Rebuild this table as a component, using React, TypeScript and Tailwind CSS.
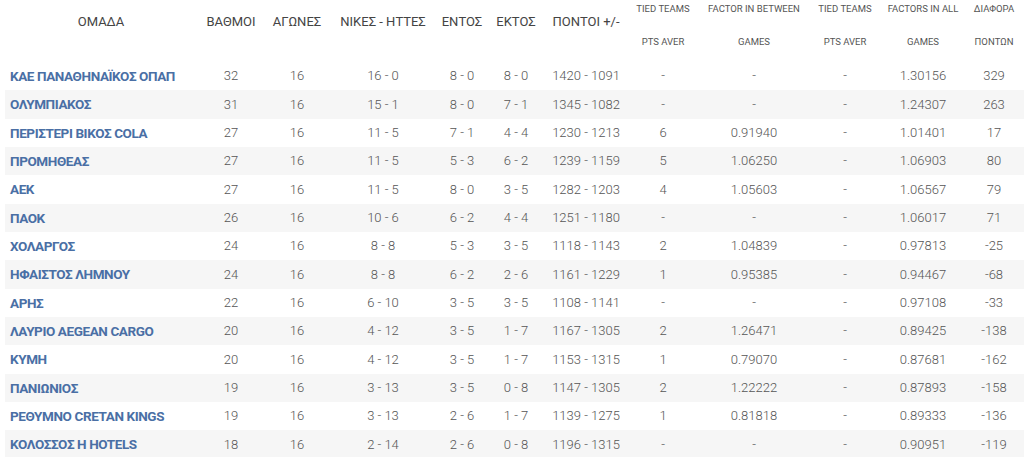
const COLS = [
  "w-[192px]",
  "w-[68px]",
  "w-[64px]",
  "w-[108px]",
  "w-[50px]",
  "w-[58px]",
  "w-[82px]",
  "w-[72px]",
  "w-[110px]",
  "w-[72px]",
  "w-[84px]",
  "w-[58px]",
];

type Row = {
  team: string;
  pts: number;
  games: number;
  wl: string;
  home: string;
  away: string;
  points: string;
  tied: string;
  factor: string;
  tied2: string;
  factorAll: string;
  diff: number;
};

const ROWS: Row[] = [
  { team: "ΚΑΕ ΠΑΝΑΘΗΝΑΪΚΟΣ ΟΠΑΠ", pts: 32, games: 16, wl: "16 - 0", home: "8 - 0", away: "8 - 0", points: "1420 - 1091", tied: "-", factor: "-", tied2: "-", factorAll: "1.30156", diff: 329 },
  { team: "ΟΛΥΜΠΙΑΚΟΣ", pts: 31, games: 16, wl: "15 - 1", home: "8 - 0", away: "7 - 1", points: "1345 - 1082", tied: "-", factor: "-", tied2: "-", factorAll: "1.24307", diff: 263 },
  { team: "ΠΕΡΙΣΤΕΡΙ ΒΙΚΟΣ COLA", pts: 27, games: 16, wl: "11 - 5", home: "7 - 1", away: "4 - 4", points: "1230 - 1213", tied: "6", factor: "0.91940", tied2: "-", factorAll: "1.01401", diff: 17 },
  { team: "ΠΡΟΜΗΘΕΑΣ", pts: 27, games: 16, wl: "11 - 5", home: "5 - 3", away: "6 - 2", points: "1239 - 1159", tied: "5", factor: "1.06250", tied2: "-", factorAll: "1.06903", diff: 80 },
  { team: "ΑΕΚ", pts: 27, games: 16, wl: "11 - 5", home: "8 - 0", away: "3 - 5", points: "1282 - 1203", tied: "4", factor: "1.05603", tied2: "-", factorAll: "1.06567", diff: 79 },
  { team: "ΠΑΟΚ", pts: 26, games: 16, wl: "10 - 6", home: "6 - 2", away: "4 - 4", points: "1251 - 1180", tied: "-", factor: "-", tied2: "-", factorAll: "1.06017", diff: 71 },
  { team: "ΧΟΛΑΡΓΟΣ", pts: 24, games: 16, wl: "8 - 8", home: "5 - 3", away: "3 - 5", points: "1118 - 1143", tied: "2", factor: "1.04839", tied2: "-", factorAll: "0.97813", diff: -25 },
  { team: "ΗΦΑΙΣΤΟΣ ΛΗΜΝΟΥ", pts: 24, games: 16, wl: "8 - 8", home: "6 - 2", away: "2 - 6", points: "1161 - 1229", tied: "1", factor: "0.95385", tied2: "-", factorAll: "0.94467", diff: -68 },
  { team: "ΑΡΗΣ", pts: 22, games: 16, wl: "6 - 10", home: "3 - 5", away: "3 - 5", points: "1108 - 1141", tied: "-", factor: "-", tied2: "-", factorAll: "0.97108", diff: -33 },
  { team: "ΛΑΥΡΙΟ AEGEAN CARGO", pts: 20, games: 16, wl: "4 - 12", home: "3 - 5", away: "1 - 7", points: "1167 - 1305", tied: "2", factor: "1.26471", tied2: "-", factorAll: "0.89425", diff: -138 },
  { team: "ΚΥΜΗ", pts: 20, games: 16, wl: "4 - 12", home: "3 - 5", away: "1 - 7", points: "1153 - 1315", tied: "1", factor: "0.79070", tied2: "-", factorAll: "0.87681", diff: -162 },
  { team: "ΠΑΝΙΩΝΙΟΣ", pts: 19, games: 16, wl: "3 - 13", home: "3 - 5", away: "0 - 8", points: "1147 - 1305", tied: "2", factor: "1.22222", tied2: "-", factorAll: "0.87893", diff: -158 },
  { team: "ΡΕΘΥΜΝΟ CRETAN KINGS", pts: 19, games: 16, wl: "3 - 13", home: "2 - 6", away: "1 - 7", points: "1139 - 1275", tied: "1", factor: "0.81818", tied2: "-", factorAll: "0.89333", diff: -136 },
  { team: "ΚΟΛΟΣΣΟΣ H HOTELS", pts: 18, games: 16, wl: "2 - 14", home: "2 - 6", away: "0 - 8", points: "1196 - 1315", tied: "-", factor: "-", tied2: "-", factorAll: "0.90951", diff: -119 },
];

function Cell({ i, children }: { i: number; children: React.ReactNode }) {
  return (
    <div
      className={`${COLS[i]} shrink-0 flex items-center justify-center whitespace-nowrap`}
    >
      {children}
    </div>
  );
}

function Head({ i, children }: { i: number; children: React.ReactNode }) {
  return (
    <div
      className={`${COLS[i]} shrink-0 flex justify-center pt-[14px] whitespace-nowrap`}
    >
      {children}
    </div>
  );
}

function SmallHead({ i, top, bottom }: { i: number; top: string; bottom: string }) {
  return (
    <div
      className={`${COLS[i]} shrink-0 flex flex-col items-center gap-[22px] pt-[3px] whitespace-nowrap text-[9.5px] leading-[11px] text-[#555] uppercase`}
    >
      <span>{top}</span>
      <span>{bottom}</span>
    </div>
  );
}

export default function App() {
  return (
    <div
      className="w-[1024px] h-[457px] overflow-hidden bg-white pl-[5px]"
      style={{ fontFamily: "Roboto, 'Liberation Sans', sans-serif" }}
    >
      {/* header */}
      <div className="flex h-[62px] text-[13px] leading-[16px] text-[#444]">
        <Head i={0}>ΟΜΑΔΑ</Head>
        <Head i={1}>ΒΑΘΜΟΙ</Head>
        <Head i={2}>ΑΓΩΝΕΣ</Head>
        <Head i={3}>ΝΙΚΕΣ - ΗΤΤΕΣ</Head>
        <Head i={4}>ΕΝΤΟΣ</Head>
        <Head i={5}>ΕΚΤΟΣ</Head>
        <Head i={6}>ΠΟΝΤΟΙ +/-</Head>
        <SmallHead i={7} top="Tied Teams" bottom="Pts Aver" />
        <SmallHead i={8} top="Factor in between" bottom="Games" />
        <SmallHead i={9} top="Tied Teams" bottom="Pts Aver" />
        <SmallHead i={10} top="Factors in all" bottom="Games" />
        <SmallHead i={11} top="Διαφορα" bottom="Ποντων" />
      </div>

      {/* rows */}
      {ROWS.map((r, idx) => (
        <div
          key={r.team}
          className={`flex h-[28.33px] text-[13px] font-light text-[#555] ${
            idx % 2 === 1 ? "bg-[#f6f6f6]" : "bg-white"
          }`}
        >
          <div className="w-[192px] shrink-0 flex items-center pl-[5px] whitespace-nowrap text-[13.5px] font-bold text-[#4a6fa5] tracking-[-0.4px]">
            {r.team}
          </div>
          <Cell i={1}>{r.pts}</Cell>
          <Cell i={2}>{r.games}</Cell>
          <Cell i={3}>{r.wl}</Cell>
          <Cell i={4}>{r.home}</Cell>
          <Cell i={5}>{r.away}</Cell>
          <Cell i={6}>{r.points}</Cell>
          <Cell i={7}>{r.tied}</Cell>
          <Cell i={8}>{r.factor}</Cell>
          <Cell i={9}>{r.tied2}</Cell>
          <Cell i={10}>{r.factorAll}</Cell>
          <Cell i={11}>{r.diff}</Cell>
        </div>
      ))}
    </div>
  );
}
